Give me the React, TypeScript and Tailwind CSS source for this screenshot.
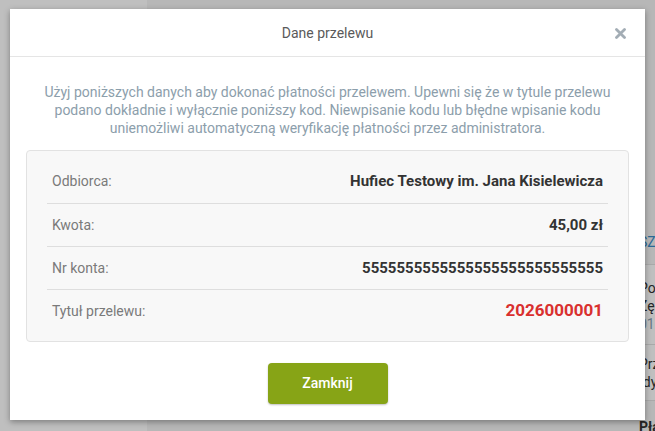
import React from "react";

const ROWS = [
  { label: "Odbiorca:", value: "Hufiec Testowy im. Jana Kisielewicza", accent: false },
  { label: "Kwota:", value: "45,00 zł", accent: false },
  { label: "Nr konta:", value: "5555555555555555555555555555", accent: false },
  { label: "Tytuł przelewu:", value: "2026000001", accent: true },
];

function BackgroundPage() {
  return (
    <div className="flex h-full w-full">
      {/* Sidebar */}
      <div className="w-[147px] shrink-0 bg-white" />
      {/* Main content, mostly hidden by the modal */}
      <div className="flex-1 bg-[#f4f4f4]">
        <div className="ml-[492px] w-[300px] pt-[232px] text-[14px] text-[#333]">
          <div className="h-[33px] border-b border-[#e2e2e2] text-[#3a8dc9]">SZESTAWIENIE</div>
          <div className="h-[80px] border-b border-[#e2e2e2] bg-white pt-[14px] leading-[18px]">
            <div>Poc</div>
            <div>Zęc</div>
            <div className="text-[#8aa0b0]">0123</div>
          </div>
          <div className="h-[56px] border-b border-[#e2e2e2] bg-white pt-[10px] leading-[18px]">
            <div>Prz</div>
            <div>Idy</div>
          </div>
          <div className="pt-[16px] font-bold">Płatności</div>
        </div>
      </div>
    </div>
  );
}

export default function App() {
  return (
    <div
      className="relative h-[431px] w-[655px] overflow-hidden"
      style={{ fontFamily: "Roboto, 'Noto Sans', sans-serif" }}
    >
      <BackgroundPage />

      {/* Backdrop */}
      <div className="absolute inset-0 bg-black/25" />

      {/* Modal */}
      <div className="absolute left-[10px] top-[9px] w-[635px] bg-white shadow-[0_2px_6px_rgba(0,0,0,0.35)]">
        {/* Header */}
        <div className="relative flex h-[48px] items-center justify-center border-b border-[#e5e5e5]">
          <span className="pt-[1px] text-[14px] text-[#5a5a5a]">Dane przelewu</span>
          <button className="absolute right-[19px] top-[18px] flex h-[12px] w-[12px] items-center justify-center">
            <svg width="11" height="11" viewBox="0 0 11 11">
              <path d="M1.5 1.5L9.5 9.5M9.5 1.5L1.5 9.5" stroke="#a3adb5" strokeWidth="2.8" strokeLinecap="round" />
            </svg>
          </button>
        </div>

        {/* Body */}
        <div className="flex flex-col items-center px-4 pb-[16px] pt-[26px]">
          <p className="text-center text-[14px] leading-[18px] text-[#8c9eab]">
            Użyj poniższych danych aby dokonać płatności przelewem. Upewni się że w tytule przelewu
            <br />
            podano dokładnie i wyłącznie poniższy kod. Niewpisanie kodu lub błędne wpisanie kodu
            <br />
            uniemożliwi automatyczną weryfikację płatności przez administratora.
          </p>

          <div className="mt-[13px] w-full rounded-[4px] border border-[#e2e2e2] bg-[#f8f8f8] px-5 py-[9px]">
            {ROWS.map((row, idx) => (
              <div
                key={row.label}
                className={`flex h-[43px] items-center justify-between px-[5px] ${
                  idx > 0 ? "border-t border-[#dedede]" : ""
                }`}
              >
                <span className="text-[14px] text-[#7a7a7a]">{row.label}</span>
                <span
                  className={
                    row.accent
                      ? "text-[17px] font-bold text-[#d9302f]"
                      : "text-[15px] font-bold text-[#333]"
                  }
                >
                  {row.value}
                </span>
              </div>
            ))}
          </div>

          <button className="mt-[21px] flex h-[41px] w-[120px] items-center justify-center rounded-[4px] bg-[#87a416] text-[14px] font-medium text-white shadow-[0_1px_2px_rgba(0,0,0,0.25)]">
            Zamknij
          </button>
        </div>
      </div>
    </div>
  );
}
